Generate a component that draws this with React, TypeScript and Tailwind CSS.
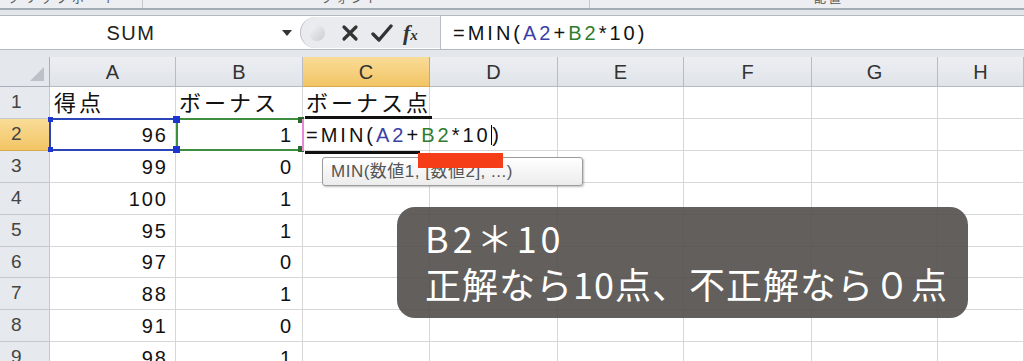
import React from 'react';

const FONT = "font-['Liberation_Sans','Noto_Sans_CJK_JP',sans-serif]";

const cols = ['A', 'B', 'C', 'D', 'E', 'F', 'G', 'H'];

const rows: { n: number; a?: string; b?: string; c?: string; h: string }[] = [
  { n: 1, a: '得点', b: 'ボーナス', c: 'ボーナス点', h: 'h-[32px]' },
  { n: 2, a: '96', b: '1', h: 'h-[32px]' },
  { n: 3, a: '99', b: '0', h: 'h-[32px]' },
  { n: 4, a: '100', b: '1', h: 'h-[32px]' },
  { n: 5, a: '95', b: '1', h: 'h-[32px]' },
  { n: 6, a: '97', b: '0', h: 'h-[31px]' },
  { n: 7, a: '88', b: '1', h: 'h-[32px]' },
  { n: 8, a: '91', b: '0', h: 'h-[32px]' },
  { n: 9, a: '98', b: '1', h: 'h-[32px]' },
];

function Formula() {
  return (
    <span className="text-[20px] tracking-[3px] text-[#111] whitespace-nowrap">
      =MIN(<span className="text-[#3b3fa8]">A2</span>+<span className="text-[#2f7d2f]">B2</span>*10
    </span>
  );
}

function FormulaBar() {
  return (
    <div className="flex flex-col">
      {/* bottom of ribbon */}
      <div className="h-[8px] bg-[#eceef1] flex overflow-hidden relative">
        <div className="w-[143px] border-r border-[#c4c9cf] overflow-hidden">
          <div className="-mt-[10px] pl-[8px] text-[12px] text-[#555] tracking-[4px] whitespace-nowrap">クリップボード</div>
        </div>
        <div className="w-[447px] border-r border-[#c4c9cf] overflow-hidden">
          <div className="-mt-[10px] pl-[178px] text-[12px] text-[#555] tracking-[3px] whitespace-nowrap">フォント</div>
        </div>
        <div className="flex-1 overflow-hidden">
          <div className="-mt-[10px] pl-[224px] text-[12px] text-[#555] tracking-[3px] whitespace-nowrap">配置</div>
        </div>
      </div>
      <div className="h-[2px] bg-[#a3abb5]" />
      <div className="h-[5px] bg-[#e3e6ea]" />
      <div className="h-[35px] flex border-y border-[#b3b9c1] bg-white">
        <div className="w-[300px] flex items-center">
          <div className="flex-1 text-center text-[20px] tracking-[1.5px] text-[#222] pr-[20px]">SUM</div>
          <div className="w-0 h-0 border-l-[5px] border-r-[5px] border-t-[6px] border-l-transparent border-r-transparent border-t-[#333] mr-[8px]" />
        </div>
        <div className="w-[140px] flex items-center bg-[#e9ebee] rounded-l-[16px] border-l border-[#b9bec5] my-[1px]">
          <div className="ml-[8px] w-[16px] h-[16px] rounded-full bg-gradient-to-br from-[#f4f5f6] to-[#c9cdd2]" />
          <svg width="18" height="18" viewBox="0 0 18 18" className="ml-[16px]">
            <path d="M3 3 L15 15 M15 3 L3 15" stroke="#333" strokeWidth="3.2" strokeLinecap="round" />
          </svg>
          <svg width="22" height="20" viewBox="0 0 22 20" className="ml-[12px]">
            <path d="M2 11 L8 17 L20 3" stroke="#333" strokeWidth="3.4" fill="none" strokeLinecap="round" strokeLinejoin="round" />
          </svg>
          <span className="ml-[10px] font-['Liberation_Serif',serif] italic font-bold text-[#333] leading-none">
            <span className="text-[22px]">f</span><span className="text-[15px]">x</span>
          </span>
        </div>
        <div className="flex-1 flex items-center border-l border-[#b9bec5] pl-[12px]">
          <Formula />
          <span className="text-[20px] tracking-[3px] text-[#111]">)</span>
        </div>
      </div>
      <div className="h-[7px] bg-[#e3e6ea]" />
    </div>
  );
}

function Sheet() {
  return (
    <div className="relative">
      <div className="grid grid-cols-[50px_126px_127px_127px_128px_126px_128px_126px_86px]">
        {/* header row */}
        <div className="h-[30px] bg-[#e4e7ec] border-r border-b border-[#a9b0b9] flex items-end justify-end pr-[5px] pb-[5px]">
          <svg width="14" height="14" viewBox="0 0 14 14">
            <path d="M14 0 L14 14 L0 14 Z" fill="#bcc1c8" />
          </svg>
        </div>
        {cols.map((c) => (
          <div
            key={c}
            className={`h-[30px] flex items-center justify-center text-[20px] text-[#333] border-r border-b ${
              c === 'C'
                ? 'bg-gradient-to-b from-[#f9dc97] to-[#f2c564] border-[#d7a94f]'
                : 'bg-gradient-to-b from-[#eceef2] to-[#e0e4e9] border-[#b5bcc5]'
            }`}
          >
            {c}
          </div>
        ))}

        {rows.map((r) => (
          <React.Fragment key={r.n}>
            <div
              className={`${r.h} flex items-center pl-[11px] text-[19px] text-[#444] border-r border-b ${
                r.n === 2
                  ? 'bg-gradient-to-b from-[#f9dc97] to-[#f2c564] border-[#d7a94f]'
                  : 'bg-[#e6e9ed] border-[#c3c8cf]'
              }`}
            >
              {r.n}
            </div>
            {r.n === 1 ? (
              <>
                <div className={`${r.h} flex items-end pl-[4px] text-[22px] tracking-[3px] text-[#111] leading-none pb-[3px] whitespace-nowrap border-r border-b border-[#d6d6d6]`}>{r.a}</div>
                <div className={`${r.h} flex items-end pl-[3px] text-[22px] tracking-[3px] text-[#111] leading-none pb-[3px] whitespace-nowrap border-r border-b border-[#d6d6d6]`}>{r.b}</div>
                <div className={`${r.h} flex items-end pl-[3px] text-[22px] tracking-[3px] text-[#111] leading-none pb-[3px] whitespace-nowrap border-r border-b border-[#d6d6d6]`}>{r.c}</div>
              </>
            ) : (
              <>
                <div className={`${r.h} flex items-center justify-end pr-[7px] text-[20px] tracking-[2px] text-[#111] border-r border-b border-[#d6d6d6]`}>{r.a}</div>
                <div className={`${r.h} flex items-center justify-end pr-[9px] text-[20px] tracking-[2px] text-[#111] border-r border-b border-[#d6d6d6]`}>{r.b}</div>
                <div className={`${r.h} flex items-center pl-[3px] border-r border-b border-[#d6d6d6] overflow-visible`}>
                  {r.n === 2 && (
                    <span className="flex items-center whitespace-nowrap">
                      <Formula />
                      <span className="w-[1.5px] h-[20px] bg-black" />
                      <span className="text-[20px] text-[#111]">)</span>
                    </span>
                  )}
                </div>
              </>
            )}
            {['D', 'E', 'F', 'G', 'H'].map((c) => (
              <div key={c} className={`${r.h} border-r border-b border-[#d6d6d6]`} />
            ))}
          </React.Fragment>
        ))}
      </div>

      {/* A2 reference box */}
      <div className="absolute left-[49px] top-[61px] w-[129px] h-[33px] border-2 border-[#2b44b8]" />
      {/* B2 reference box */}
      <div className="absolute left-[176px] top-[61px] w-[128px] h-[33px] border-2 border-[#3f8e3f]" />
      {/* handles */}
      <div className="absolute left-[298px] top-[60px] w-[6px] h-[6px] bg-[#2c6a2c]" />
      <div className="absolute left-[298px] top-[89px] w-[6px] h-[6px] bg-[#2c6a2c]" />
      <div className="absolute left-[48px] top-[60px] w-[5px] h-[5px] bg-[#1d35d0]" />
      <div className="absolute left-[48px] top-[90px] w-[5px] h-[5px] bg-[#1d35d0]" />
      <div className="absolute left-[173px] top-[59px] w-[7px] h-[7px] bg-[#1d35d0]" />
      <div className="absolute left-[173px] top-[89px] w-[7px] h-[7px] bg-[#1d35d0]" />
      {/* pink edit edge */}
      <div className="absolute left-[302px] top-[62px] w-[2px] h-[32px] bg-[#e58ad8]" />
      {/* C1 underline */}
      <div className="absolute left-[305px] top-[59px] w-[127px] h-[3px] bg-[#111]" />
      {/* C2 underline */}
      <div className="absolute left-[305px] top-[94px] w-[115px] h-[3px] bg-[#111]" />

      {/* function tooltip */}
      <div className="absolute left-[322px] top-[100px] w-[261px] h-[29px] rounded-[3px] border border-[#9c9c9c] bg-gradient-to-b from-[#ffffff] to-[#ececec] shadow-[1px_1px_2px_rgba(0,0,0,0.25)] flex items-center pl-[8px] text-[17px] text-[#555] tracking-[0.5px] whitespace-nowrap">
        MIN(数値1, [数値2], ...)
      </div>
      {/* red marker */}
      <div className="absolute left-[418px] top-[96px] w-[85px] h-[15px] bg-[#f53d17]" />

      {/* caption */}
      <div className="absolute left-[397px] top-[150px] w-[571px] h-[111px] rounded-[18px] bg-[rgba(82,78,74,0.9)] pl-[28px] pt-[8px] text-white font-['Noto_Sans_CJK_JP',sans-serif]">
        <div className="text-[36px] leading-[44px] tracking-[4px]">B2＊10</div>
        <div className="text-[36px] leading-[48px] tracking-[1px]">正解なら10点、不正解なら０点</div>
      </div>
    </div>
  );
}

export default function App() {
  return (
    <div className={`w-[1024px] h-[361px] overflow-hidden bg-white ${FONT}`}>
      <FormulaBar />
      <Sheet />
    </div>
  );
}
